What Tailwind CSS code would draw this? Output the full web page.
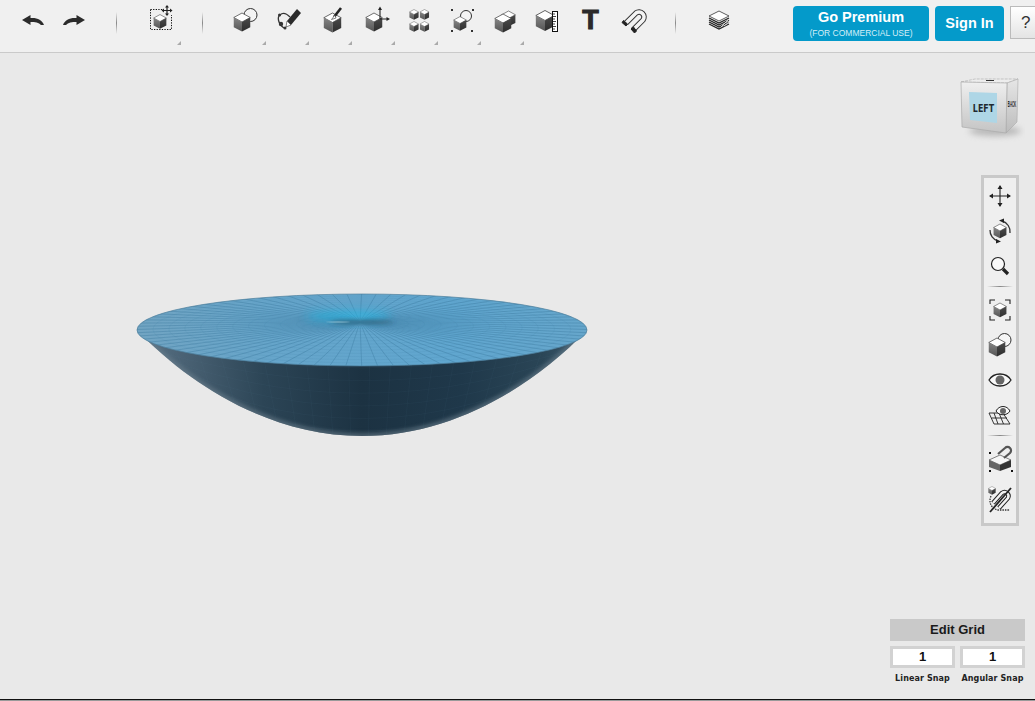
<!DOCTYPE html>
<html>
<head>
<meta charset="utf-8">
<script src="https://cdn.jsdelivr.net/npm/@tailwindcss/browser@4"></script>
</head>
<body class="m-0">
<svg class="absolute w-0 h-0">
  <defs>
    <linearGradient id="gl" x1="0" y1="0" x2="0" y2="1"><stop offset="0" stop-color="#858585"/><stop offset="1" stop-color="#555"/></linearGradient>
    <linearGradient id="gr" x1="0" y1="0" x2="0" y2="1"><stop offset="0" stop-color="#4a4a4a"/><stop offset="1" stop-color="#2e2e2e"/></linearGradient>
    <symbol id="cube" viewBox="0 0 24 26">
      <polygon points="12,1 23,7 12,13 1,7" fill="#fff" stroke="#444" stroke-width="1"/>
      <polygon points="1,7 12,13 12,25.500 1,20" fill="url(#gl)"/>
      <polygon points="23,7 12,13 12,25.500 23,20" fill="url(#gr)"/>
    </symbol>
  </defs>
</svg>
<div class="w-[1035px] h-[701px] flex flex-col overflow-hidden bg-[#e9e9e9] font-['Liberation_Sans',Arial,sans-serif]">
  <!-- toolbar -->
  <header class="h-[53px] shrink-0 flex items-start pl-[12px] pt-[4px] bg-[#f0f0f0] border-b border-[#cacaca]">
    <button class="w-[41px] h-8 shrink-0 flex items-center justify-center">
      <svg class="w-7 h-7" viewBox="0 0 28 28"><path d="M3 14 L11.500 9 V12 C18 11.500 23 13.500 25 19 L22 19 C20 16.500 16 16 11.500 16 V19 Z" fill="#2b2b2b"/></svg>
    </button>
    <button class="w-[41px] h-8 shrink-0 flex items-center justify-center">
      <svg class="w-7 h-7" viewBox="0 0 28 28"><path d="M25 14 L16.500 9 V12 C10 11.500 5 13.500 3 19 L6 19 C8 16.500 12 16 16.500 16 V19 Z" fill="#2b2b2b"/></svg>
    </button>
    <div class="ml-[22px] mt-[8px] w-px h-[22px] shrink-0 bg-linear-to-b from-transparent via-[#888] to-transparent"></div>
    <button class="relative ml-[28px] w-8 h-8 shrink-0">
      <svg class="w-8 h-8" viewBox="0 0 32 32">
        <rect x="5.500" y="5.500" width="21" height="20" fill="none" stroke="#111" stroke-width="1" stroke-dasharray="1.300 1.300"/>
        <use href="#cube" x="8" y="10" width="14" height="15"/>
        <rect x="19" y="1" width="9" height="10" fill="#f0f0f0"/>
        <path d="M22 2 V11 M17.500 6.500 H26.500" stroke="#222" stroke-width="1.200" fill="none"/>
        <path d="M22 1 L20 3.500 H24 Z M22 12 L20 9.500 H24 Z M16.500 6.500 L19 4.500 V8.500 Z M27.500 6.500 L25 4.500 V8.500 Z" fill="#222"/>
      </svg>
      <svg class="absolute right-[-4px] top-[37px] w-1 h-1" viewBox="0 0 4 4"><path d="M4 0 V4 H0 Z" fill="#aaa"/></svg>
    </button>
    <div class="ml-[25px] mt-[8px] w-px h-[22px] shrink-0 bg-linear-to-b from-transparent via-[#888] to-transparent"></div>
    <div class="ml-[22px] flex shrink-0">
      <button class="relative w-[43px] h-8 flex justify-center">
        <svg class="w-8 h-8" viewBox="0 0 32 32"><circle cx="19.500" cy="11" r="6.500" fill="#f4f4f4" stroke="#333" stroke-width="1"/><use href="#cube" x="2" y="8" width="18" height="20"/></svg>
        <svg class="absolute right-[2px] top-[37px] w-1 h-1" viewBox="0 0 4 4"><path d="M4 0 V4 H0 Z" fill="#aaa"/></svg>
      </button>
      <button class="relative w-[43px] h-8 flex justify-center">
        <svg class="w-8 h-8" viewBox="0 0 32 32"><path d="M10 24 C4 20 3 13 6 11 C9 8 13 10 16 13" fill="none" stroke="#333" stroke-width="1.300"/><circle cx="5.500" cy="11" r="1.500" fill="#333"/><circle cx="7" cy="20" r="2.200" fill="#333"/><circle cx="11" cy="24" r="1.500" fill="#333"/><path d="M23 5 L27 9 L17 21 L13 17 Z" fill="#2b2b2b"/><path d="M13 17 L17 21 L12 23 Z" fill="#fff" stroke="#333" stroke-width=".6"/></svg>
        <svg class="absolute right-[2px] top-[37px] w-1 h-1" viewBox="0 0 4 4"><path d="M4 0 V4 H0 Z" fill="#aaa"/></svg>
      </button>
      <button class="relative w-[43px] h-8 flex justify-center">
        <svg class="w-8 h-8" viewBox="0 0 32 32"><use href="#cube" x="6" y="8" width="19" height="21"/><path d="M24 4 L17 13" stroke="#222" stroke-width="2.600"/><path d="M18 11 L14.500 15.500 L19 14 Z" fill="#fff" stroke="#333" stroke-width=".6"/></svg>
        <svg class="absolute right-[2px] top-[37px] w-1 h-1" viewBox="0 0 4 4"><path d="M4 0 V4 H0 Z" fill="#aaa"/></svg>
      </button>
      <button class="relative w-[43px] h-8 flex justify-center">
        <svg class="w-8 h-8" viewBox="0 0 32 32"><use href="#cube" x="5" y="8" width="18" height="20"/><path d="M20 15 V5 M20 15 H28" stroke="#222" stroke-width="1.100" fill="none"/><path d="M20 2.500 L18 6 H22 Z M30 15 L26.500 13 V17 Z" fill="#222"/></svg>
        <svg class="absolute right-[2px] top-[37px] w-1 h-1" viewBox="0 0 4 4"><path d="M4 0 V4 H0 Z" fill="#aaa"/></svg>
      </button>
      <button class="relative w-[43px] h-8 flex justify-center">
        <svg class="w-8 h-8" viewBox="0 0 32 32"><use href="#cube" x="6" y="5" width="10" height="11"/><use href="#cube" x="16.500" y="5" width="10" height="11"/><use href="#cube" x="6" y="17" width="10" height="11"/><use href="#cube" x="16.500" y="17" width="10" height="11"/></svg>
        <svg class="absolute right-[2px] top-[37px] w-1 h-1" viewBox="0 0 4 4"><path d="M4 0 V4 H0 Z" fill="#aaa"/></svg>
      </button>
      <button class="relative w-[43px] h-8 flex justify-center">
        <svg class="w-8 h-8" viewBox="0 0 32 32"><circle cx="20" cy="12" r="5.500" fill="#f4f4f4" stroke="#333"/><use href="#cube" x="7" y="12" width="14" height="15"/><g fill="#333"><rect x="5" y="5" width="2" height="2"/><rect x="26" y="5" width="2" height="2"/><rect x="5" y="26" width="2" height="2"/><rect x="25" y="26" width="2" height="2"/></g></svg>
        <svg class="absolute right-[2px] top-[37px] w-1 h-1" viewBox="0 0 4 4"><path d="M4 0 V4 H0 Z" fill="#aaa"/></svg>
      </button>
      <button class="relative w-[43px] h-8 flex justify-center">
        <svg class="w-8 h-8" viewBox="0 0 32 32"><use href="#cube" x="12" y="6" width="15" height="17"/><use href="#cube" x="5" y="9" width="18" height="20"/></svg>
        <svg class="absolute right-[2px] top-[37px] w-1 h-1" viewBox="0 0 4 4"><path d="M4 0 V4 H0 Z" fill="#aaa"/></svg>
      </button>
      <button class="w-[43px] h-8 flex justify-center">
        <svg class="w-8 h-8" viewBox="0 0 32 32"><use href="#cube" x="3" y="5" width="20" height="23"/><rect x="20.500" y="7.500" width="5" height="20" fill="#fff" stroke="#111"/><path d="M21 10 H23 M21 12.500 H24 M21 15 H23 M21 17.500 H24 M21 20 H23 M21 22.500 H24 M21 25 H23" stroke="#111" stroke-width=".8"/></svg>
      </button>
      <button class="w-[43px] h-8 flex items-center justify-center text-[27px] leading-8 font-bold text-[#2a2a2a] [-webkit-text-stroke:1px_#2a2a2a]">T</button>
      <button class="w-[43px] h-8 flex justify-center">
        <svg class="w-8 h-8" viewBox="0 0 32 32"><path d="M8 19 L18 9 A5 5 0 0 1 25 16 L15 26" fill="none" stroke="#333" stroke-width="5.500"/><path d="M8 19 L18 9 A5 5 0 0 1 25 16 L15 26" fill="none" stroke="#f4f4f4" stroke-width="3.600"/><path d="M5.500 16.500 L9.500 20 L8 22 L4 18.500 Z M15.500 23 L18.500 27 L16.500 29 L13 25 Z" fill="#222" stroke="#222"/></svg>
      </button>
    </div>
    <div class="ml-[20px] mt-[8px] w-px h-[22px] shrink-0 bg-linear-to-b from-transparent via-[#888] to-transparent"></div>
    <button class="ml-[27px] w-8 h-8 shrink-0">
      <svg class="w-8 h-8" viewBox="0 0 32 32"><polygon points="16,7 26,12 16,17 6,12" fill="#fff" stroke="#333" stroke-width=".8"/><path d="M6 14 L16 19 L26 14 M6 16 L16 21 L26 16 M6 18 L16 23 L26 18 M6 20 L16 25 L26 20" fill="none" stroke="#222" stroke-width="1.200"/><path d="M18 23 L26 15 M21 22 L26 18" stroke="#eee" stroke-width=".8"/></svg>
    </button>
    <a class="ml-[58px] mt-[2px] w-[136px] h-[35px] shrink-0 rounded-sm bg-[#049aca] text-white flex flex-col items-center">
      <span class="text-[14.5px] leading-[18px] mt-[2px] font-bold">Go Premium</span>
      <span class="text-[8.5px] leading-[11px] mt-[2px] text-[#d5eef7]">(FOR COMMERCIAL USE)</span>
    </a>
    <a class="ml-[6px] mt-[2px] w-[69px] h-[35px] shrink-0 rounded-sm bg-[#049aca] text-white text-[14.5px] font-bold flex items-center justify-center">Sign In</a>
    <button class="ml-[6px] mt-[2px] w-[40px] h-[33px] shrink-0 border border-[#bbb] bg-linear-to-b from-white to-[#e4e4e4] text-[17px] text-[#333] text-left pl-[10px]">?</button>
  </header>

  <!-- canvas -->
  <main class="relative flex-1 overflow-hidden bg-[#e9e9e9]">
    <svg class="absolute left-0 top-[-53px] w-[1035px] h-[701px]" viewBox="0 0 1035 701">
      <defs>
        <linearGradient id="under" x1="0" y1="0" x2="1" y2="0">
          <stop offset="0" stop-color="#5a7488"/><stop offset=".1" stop-color="#4a6274"/><stop offset=".28" stop-color="#2c4556"/><stop offset=".5" stop-color="#1c3242"/><stop offset=".72" stop-color="#1f384a"/><stop offset=".9" stop-color="#2a4556"/><stop offset="1" stop-color="#3e5c70"/>
        </linearGradient>
        <linearGradient id="topf" x1="0" y1="0" x2="1" y2="0">
          <stop offset="0" stop-color="#71a4c2"/><stop offset=".3" stop-color="#66a5ca"/><stop offset=".7" stop-color="#60a6cf"/><stop offset="1" stop-color="#66a6cb"/>
        </linearGradient>
        <clipPath id="bowl"><path d="M138 331 C190 385 270 436 362 436 C454 436 534 385 586 331 Z"/></clipPath>
        <clipPath id="rim"><ellipse cx="362" cy="330" rx="225" ry="36"/></clipPath>
        <filter id="b1" x="-50%" y="-100%" width="200%" height="300%"><feGaussianBlur stdDeviation="5"/></filter>
        <filter id="b2" x="-50%" y="-200%" width="200%" height="500%"><feGaussianBlur stdDeviation="2"/></filter>
      </defs>
      <path d="M138 331 C190 385 270 436 362 436 C454 436 534 385 586 331 Z" fill="url(#under)"/>
      <g clip-path="url(#bowl)">
        <path d="M138 331 C190 385 270 436 362 436 C454 436 534 385 586 331" fill="none" stroke="#6c7f8c" stroke-width="5" filter="url(#b2)" opacity=".7"/>
        <g id="undermesh" fill="none" stroke="#6b93ad" stroke-width=".5" opacity=".1"></g>
      </g>
      <ellipse cx="362" cy="330" rx="225" ry="36" fill="url(#topf)"/>
      <g clip-path="url(#rim)">
        <g id="rings" fill="none" stroke="#3e7fa4" stroke-width=".5" opacity=".22"></g>
        <g id="spokes" stroke="#37769b" stroke-width=".6" opacity=".6"></g>
        <ellipse cx="348" cy="316" rx="42" ry="5" fill="#22b4e0" opacity=".75" filter="url(#b1)"/>
        <ellipse cx="362" cy="322" rx="32" ry="1.600" fill="#33495a" opacity=".7" filter="url(#b2)"/>
        <ellipse cx="338" cy="322" rx="12" ry=".7" fill="#a9d4e3" opacity=".5"/>
      </g>
      <ellipse cx="362" cy="330" rx="225" ry="36" fill="none" stroke="#4f7f9c" stroke-width=".7"/>
    </svg>

    <!-- view cube -->
    <svg class="absolute right-[10px] top-[20px] w-[70px] h-[70px]" viewBox="955 73 70 70">
      <defs>
        <linearGradient id="cf" x1="0" y1="0" x2="0" y2="1"><stop offset="0" stop-color="#efefef"/><stop offset="1" stop-color="#c4c4c4"/></linearGradient>
        <linearGradient id="cr" x1="0" y1="0" x2="0" y2="1"><stop offset="0" stop-color="#e6e6e6"/><stop offset="1" stop-color="#bcbcbc"/></linearGradient>
        <filter id="cs" x="-30%" y="-100%" width="160%" height="300%"><feGaussianBlur stdDeviation="3"/></filter>
      </defs>
      <ellipse cx="995" cy="131" rx="26" ry="5" fill="#8d8d8d" opacity=".55" filter="url(#cs)"/>
      <polygon points="961,82 975,79 1018,79 1007,83" fill="#ededed" stroke="#aaa" stroke-width=".6" stroke-dasharray="3 1"/>
      <polygon points="1007,83 1018,79 1017,122 1006,133" fill="url(#cr)" stroke="#aaa" stroke-width=".6"/>
      <polygon points="961,82 1007,83 1006,133 962,127" fill="url(#cf)" stroke="#aaa" stroke-width=".7"/>
      <polygon points="969,92 997,93 997,123 970,120" fill="#aed6e6"/>
      <text transform="translate(983.500,112) scale(.72,1)" text-anchor="middle" font-family="DejaVu Sans" font-weight="bold" font-size="11" fill="#1f2a30">LEFT</text>
      <text transform="translate(1012,107) scale(.32,1)" text-anchor="middle" font-family="Liberation Sans" font-size="9" font-weight="bold" fill="#222">BACK</text>
      <path d="M986 80.500 H994" stroke="#333" stroke-width="1"/>
    </svg>

    <!-- view tools -->
    <aside class="absolute left-[981px] top-[122px] w-[38px] h-[351px] border-[3px] border-[#c9c9c9] bg-[#efefef] flex flex-col items-center">
      <svg class="w-8 h-8 mt-[2px] shrink-0" viewBox="0 0 32 32"><path d="M16 6 V26 M6 16 H26" stroke="#222" stroke-width="1.100"/><path d="M16 5 L13.500 9 H18.500 Z M16 27 L13.500 23 H18.500 Z M5 16 L9 13.500 V18.500 Z M27 16 L23 13.500 V18.500 Z" fill="#222"/></svg>
      <svg class="w-8 h-8 mt-[3px] shrink-0" viewBox="0 0 32 32"><use href="#cube" x="9" y="8" width="14" height="16"/><path d="M18 6 A11 11 0 0 1 26 18 M14 26 A11 11 0 0 1 6 15" fill="none" stroke="#333" stroke-width="1.300"/><path d="M15 5.500 L20 3.500 V8 Z M17 26.500 L12 28.500 V24 Z" fill="#222"/></svg>
      <svg class="w-8 h-8 mt-[3px] shrink-0" viewBox="0 0 32 32"><circle cx="14" cy="14" r="6.500" fill="#fafafa" stroke="#222" stroke-width="1.200"/><path d="M19 19 L24 24" stroke="#222" stroke-width="3.200"/></svg>
      <div class="w-[26px] h-px mt-[4px] shrink-0 bg-linear-to-r from-transparent via-[#888] to-transparent"></div>
      <svg class="w-8 h-8 mt-[7px] shrink-0" viewBox="0 0 32 32"><path d="M6 10 V6 H11 M21 6 H26 V10 M26 22 V26 H21 M11 26 H6 V22" fill="none" stroke="#222" stroke-width="1.100"/><use href="#cube" x="9" y="8" width="14" height="16"/></svg>
      <svg class="w-8 h-8 mt-[3px] shrink-0" viewBox="0 0 32 32"><circle cx="20.500" cy="11" r="6.500" fill="#f6f6f6" stroke="#333"/><use href="#cube" x="4" y="8" width="18" height="20"/></svg>
      <svg class="w-8 h-8 mt-[3px] shrink-0" viewBox="0 0 32 32"><path d="M5 16 C10 8 22 8 27 16 C22 24 10 24 5 16 Z" fill="#fafafa" stroke="#222" stroke-width="1.300"/><circle cx="16" cy="16" r="4.500" fill="#666"/></svg>
      <svg class="w-8 h-8 mt-[3px] shrink-0" viewBox="0 0 32 32"><path d="M5 14 H19 L26 25 H10 Z M7.500 19 H23 M10 14 L14 25 M15 14 L19.500 25" fill="none" stroke="#222" stroke-width=".9"/><path d="M12 12 C15 6 23 6 26 12 C23 17 15 17 12 12 Z" fill="#fafafa" stroke="#222"/><circle cx="19" cy="12" r="3" fill="#666"/></svg>
      <div class="w-[26px] h-px mt-[4px] shrink-0 bg-linear-to-r from-transparent via-[#888] to-transparent"></div>
      <svg class="w-8 h-8 mt-[6px] shrink-0" viewBox="0 0 32 32"><polygon points="5,18 16,13 27,18 16,23" fill="#f6f6f6" stroke="#333" stroke-width=".6"/><polygon points="5,18 16,23 16,29 5,25" fill="#666"/><polygon points="27,18 16,23 16,29 27,25" fill="#333"/><path d="M14 12 L21 6 A3.500 3.500 0 0 1 26 11 L20 16" fill="none" stroke="#555" stroke-width="2.200"/><g fill="#111"><rect x="5" y="10" width="2" height="2"/><rect x="5" y="28" width="2" height="2"/><rect x="27" y="28" width="2" height="2"/></g></svg>
      <svg class="w-8 h-8 mt-[9px] shrink-0" viewBox="0 0 32 32"><use href="#cube" x="4" y="3" width="8" height="9"/><path d="M7 13 C4 20 8 26 14 27 H26" fill="none" stroke="#333" stroke-width="1.300" stroke-dasharray="1.500 1"/><path d="M9 20 L18 10 A4 4 0 0 1 24 15 L15 25" fill="none" stroke="#222" stroke-width="4.500"/><path d="M9 20 L18 10 A4 4 0 0 1 24 15 L15 25" fill="none" stroke="#f2f2f2" stroke-width="2.500"/><path d="M27 5 L6 29" stroke="#222" stroke-width="1.800"/></svg>
    </aside>

    <!-- grid -->
    <section class="absolute left-[890px] top-[566px] w-[135px]">
      <div class="h-[22px] bg-[#c9c9c9] text-[13px] font-bold text-[#1a1a1a] text-center leading-[22px]">Edit Grid</div>
      <div class="flex justify-between mt-[5px]">
        <div class="w-[65px] h-[22px] border-[3px] border-[#d2d2d2] bg-white text-center text-[13px] font-bold leading-[16px] text-[#111]">1</div>
        <div class="w-[65px] h-[22px] border-[3px] border-[#d2d2d2] bg-white text-center text-[13px] font-bold leading-[16px] text-[#111]">1</div>
      </div>
      <div class="flex justify-between mt-[5px]">
        <span class="w-[65px] text-center text-[8px] leading-[12px] font-bold tracking-[0.1px] text-[#222] font-['DejaVu_Sans',sans-serif] whitespace-nowrap">Linear Snap</span>
        <span class="w-[65px] text-center text-[8px] leading-[12px] font-bold tracking-[0.1px] text-[#222] font-['DejaVu_Sans',sans-serif] whitespace-nowrap">Angular Snap</span>
      </div>
    </section>
  </main>
  <div class="h-[2px] shrink-0 border-t border-[#111] bg-[#9a9a9a]"></div>
</div>
<script>
(function(){
  var NS='http://www.w3.org/2000/svg';
  var spokes=document.getElementById('spokes');
  for(var a=0;a<360;a+=4.5){
    var r=a*Math.PI/180,l=document.createElementNS(NS,'line');
    l.setAttribute('x1',360);l.setAttribute('y1',322);
    l.setAttribute('x2',362+240*Math.cos(r));l.setAttribute('y2',330+44*Math.sin(r));
    spokes.appendChild(l);
  }
  var rings=document.getElementById('rings');
  for(var k=1;k<=14;k++){
    var e=document.createElementNS(NS,'ellipse'),f=k/14;
    e.setAttribute('cx',360+2*f);e.setAttribute('cy',322+8*f);
    e.setAttribute('rx',225*f);e.setAttribute('ry',36*f);
    rings.appendChild(e);
  }
  var m=document.getElementById('undermesh');
  for(var j=1;j<=9;j++){
    var c=document.createElementNS(NS,'path'),t=j*11;
    c.setAttribute('d','M130 '+(330+t*0.3)+' Q362 '+(330+t*2)+' 594 '+(330+t*0.3));
    m.appendChild(c);
  }
  for(var x=150;x<590;x+=22){
    var v=document.createElementNS(NS,'line');
    v.setAttribute('x1',x);v.setAttribute('y1',340);v.setAttribute('x2',362+(x-362)*0.8);v.setAttribute('y2',440);
    m.appendChild(v);
  }
})();
</script>
</body>
</html>
